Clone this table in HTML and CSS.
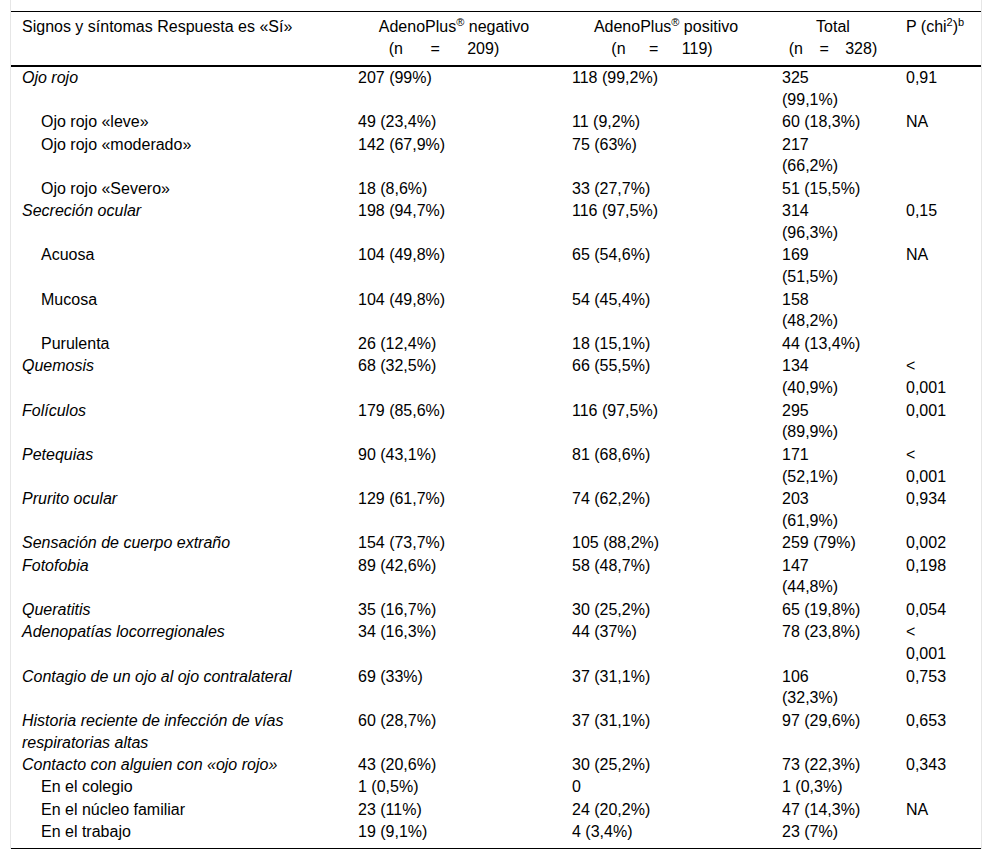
FILE: index.html
```html
<!DOCTYPE html>
<html lang="es">
<head>
<meta charset="utf-8">
<title>Signos y síntomas</title>
<link rel="stylesheet" href="styles.css">
</head>
<body>
<div class="frame">
<table class="data">
<colgroup>
<col class="c1"><col class="c2"><col class="c3"><col class="c4"><col class="c5">
</colgroup>
<thead>
<tr>
<th class="left">Signos y síntomas Respuesta es «Sí»</th>
<th class="center">AdenoPlus<sup>®</sup> negativo<span class="n n-wide">(n = 209)</span></th>
<th class="center">AdenoPlus<sup>®</sup> positivo<span class="n n-mid">(n = 119)</span></th>
<th class="center">Total<span class="n">(n = 328)</span></th>
<th class="left">P (chi<sup>2</sup>)<sup>b</sup></th>
</tr>
</thead>
<tbody>
<tr><td class="main">Ojo rojo</td><td>207 (99%)</td><td>118 (99,2%)</td><td>325 (99,1%)</td><td>0,91</td></tr>
<tr><td class="sub">Ojo rojo «leve»</td><td>49 (23,4%)</td><td>11 (9,2%)</td><td>60 (18,3%)</td><td>NA</td></tr>
<tr><td class="sub">Ojo rojo «moderado»</td><td>142 (67,9%)</td><td>75 (63%)</td><td>217 (66,2%)</td><td></td></tr>
<tr><td class="sub">Ojo rojo «Severo»</td><td>18 (8,6%)</td><td>33 (27,7%)</td><td>51 (15,5%)</td><td></td></tr>
<tr><td class="main">Secreción ocular</td><td>198 (94,7%)</td><td>116 (97,5%)</td><td>314 (96,3%)</td><td>0,15</td></tr>
<tr><td class="sub">Acuosa</td><td>104 (49,8%)</td><td>65 (54,6%)</td><td>169 (51,5%)</td><td>NA</td></tr>
<tr><td class="sub">Mucosa</td><td>104 (49,8%)</td><td>54 (45,4%)</td><td>158 (48,2%)</td><td></td></tr>
<tr><td class="sub">Purulenta</td><td>26 (12,4%)</td><td>18 (15,1%)</td><td>44 (13,4%)</td><td></td></tr>
<tr><td class="main">Quemosis</td><td>68 (32,5%)</td><td>66 (55,5%)</td><td>134 (40,9%)</td><td>&lt; 0,001</td></tr>
<tr><td class="main">Folículos</td><td>179 (85,6%)</td><td>116 (97,5%)</td><td>295 (89,9%)</td><td>0,001</td></tr>
<tr><td class="main">Petequias</td><td>90 (43,1%)</td><td>81 (68,6%)</td><td>171 (52,1%)</td><td>&lt; 0,001</td></tr>
<tr><td class="main">Prurito ocular</td><td>129 (61,7%)</td><td>74 (62,2%)</td><td>203 (61,9%)</td><td>0,934</td></tr>
<tr><td class="main">Sensación de cuerpo extraño</td><td>154 (73,7%)</td><td>105 (88,2%)</td><td>259 (79%)</td><td>0,002</td></tr>
<tr><td class="main">Fotofobia</td><td>89 (42,6%)</td><td>58 (48,7%)</td><td>147 (44,8%)</td><td>0,198</td></tr>
<tr><td class="main">Queratitis</td><td>35 (16,7%)</td><td>30 (25,2%)</td><td>65 (19,8%)</td><td>0,054</td></tr>
<tr><td class="main">Adenopatías locorregionales</td><td>34 (16,3%)</td><td>44 (37%)</td><td>78 (23,8%)</td><td>&lt; 0,001</td></tr>
<tr><td class="main">Contagio de un ojo al ojo contralateral</td><td>69 (33%)</td><td>37 (31,1%)</td><td>106 (32,3%)</td><td>0,753</td></tr>
<tr><td class="main">Historia reciente de infección de vías respiratorias altas</td><td>60 (28,7%)</td><td>37 (31,1%)</td><td>97 (29,6%)</td><td>0,653</td></tr>
<tr><td class="main">Contacto con alguien con «ojo rojo»</td><td>43 (20,6%)</td><td>30 (25,2%)</td><td>73 (22,3%)</td><td>0,343</td></tr>
<tr><td class="sub">En el colegio</td><td>1 (0,5%)</td><td>0</td><td>1 (0,3%)</td><td></td></tr>
<tr><td class="sub">En el núcleo familiar</td><td>23 (11%)</td><td>24 (20,2%)</td><td>47 (14,3%)</td><td>NA</td></tr>
<tr><td class="sub">En el trabajo</td><td>19 (9,1%)</td><td>4 (3,4%)</td><td>23 (7%)</td><td></td></tr>
</tbody>
</table>
</div>
</body>
</html>
```
FILE: styles.css
```css
html, body {
  margin: 0;
  padding: 0;
  background: #ffffff;
}

body {
  font-family: "Liberation Sans", Arial, sans-serif;
  font-size: 16px;
  line-height: 21.77px;
  color: #000000;
}

.frame {
  margin-left: 10px;
  width: 970px;
  padding-top: 11px;
  border-left: 1px solid #e6e6e6;
  border-right: 1px solid #e6e6e6;
}

.data {
  width: 970px;
  table-layout: fixed;
  border-collapse: collapse;
  border-top: 1px solid #000000;
  border-bottom: 1px solid #000000;
}

.c1 { width: 336px; }
.c2 { width: 214px; }
.c3 { width: 210px; }
.c4 { width: 124px; }
.c5 { width: 86px; }

.data th {
  font-weight: normal;
  vertical-align: top;
  padding: 4px 11px 5px 11px;
  border-bottom: 2px solid #000000;
}

.data th.left { text-align: left; }
.data th.center { text-align: center; }

.data th .n {
  display: block;
  white-space: nowrap;
  word-spacing: 12px;
}

.data th .n-wide { word-spacing: 23px; padding-right: 20px; }
.data th .n-mid { word-spacing: 19px; padding-right: 8px; }

.data sup {
  font-size: 11px;
  line-height: 0;
  vertical-align: 6px;
}

.data td {
  vertical-align: top;
  text-align: left;
  padding: 0.35px 30px 0.35px 11px;
}

.data td.main { font-style: italic; }
.data td.sub { padding-left: 30px; }

.data tbody tr:last-child td { padding-bottom: 5px; }
```
